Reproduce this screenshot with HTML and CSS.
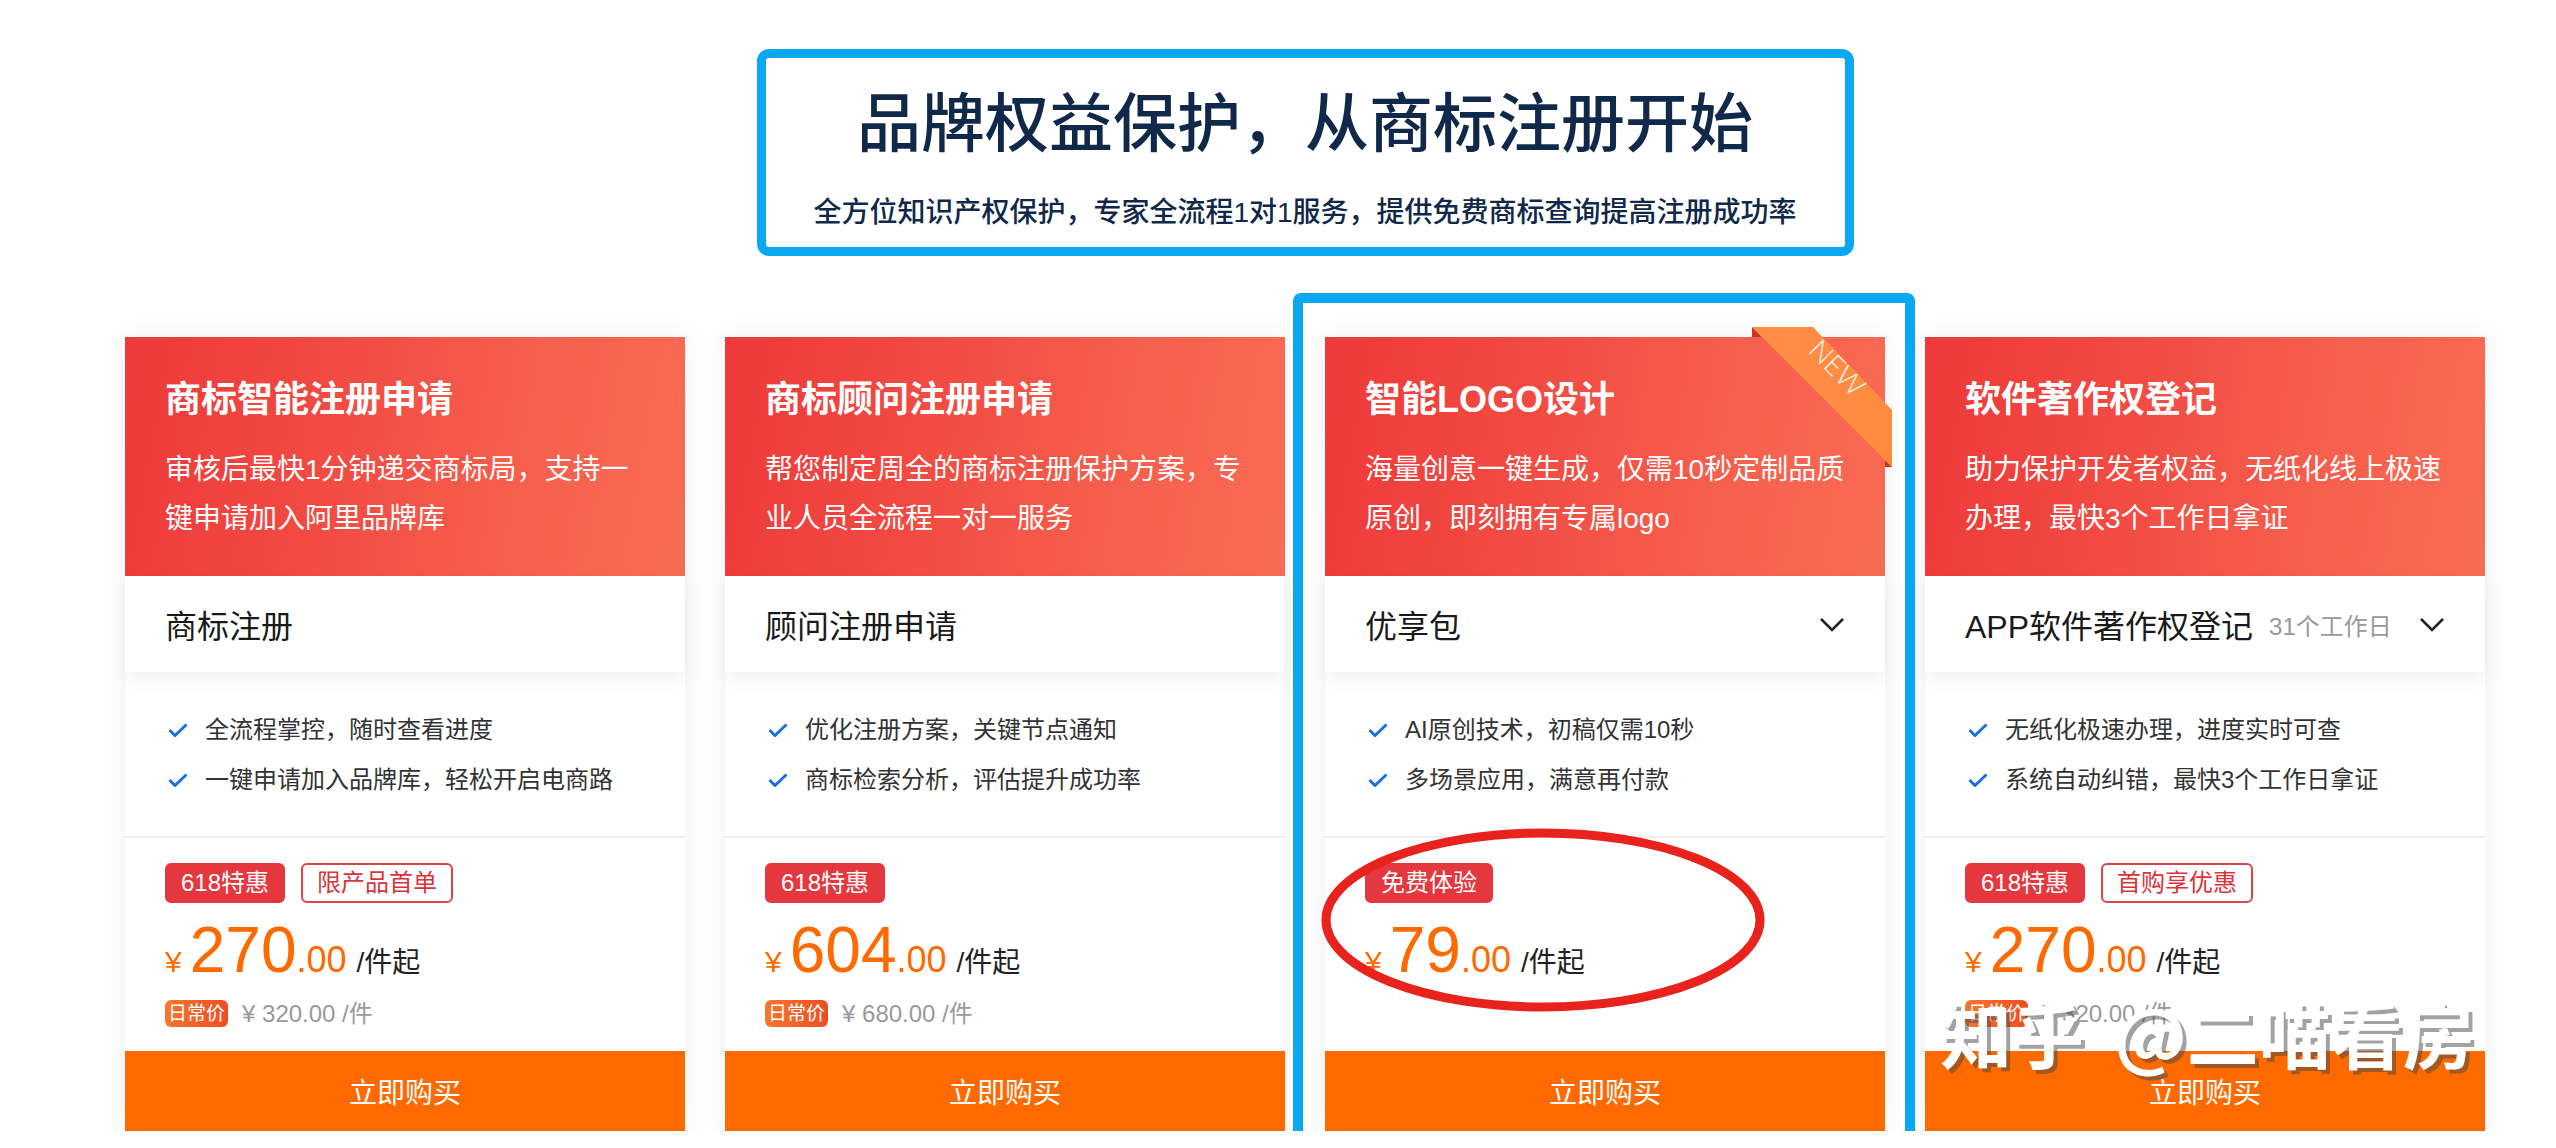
FILE: index.html
```html
<!DOCTYPE html>
<html lang="zh-CN">

<head>
    <meta charset="UTF-8">
    <meta name="viewport" content="width=device-width, initial-scale=1.0">
    <title>品牌权益保护</title>

    <link rel="stylesheet" href="styles.css">
</head>

<body>
<div class="page">
    <div class="intro">
        <h1 class="intro-title">品牌权益保护，从商标注册开始</h1>
        <p class="intro-desc">全方位知识产权保护，专家全流程1对1服务，提供免费商标查询提高注册成功率</p>
    </div>

    <div class="card-list">
        <!-- 商标智能注册 -->
        <div class="card">
            <div class="card-head">
                <h2 class="card-title">商标智能注册申请</h2>
                <p class="card-desc">审核后最快1分钟递交商标局，支持一键申请加入阿里品牌库</p>
            </div>
            <div class="card-select">
                <span class="select-name">商标注册</span>
            </div>
            <ul class="card-feature">
                <li><svg class="check" viewBox="0 0 20 14"><polyline points="1.5,7 7,12.5 18.5,1.5"/></svg>全流程掌控，随时查看进度</li>
                <li><svg class="check" viewBox="0 0 20 14"><polyline points="1.5,7 7,12.5 18.5,1.5"/></svg>一键申请加入品牌库，轻松开启电商路</li>
            </ul>
            <div class="card-price">
                <div class="tags">
                    <span class="tag tag-fill">618特惠</span>
                    <span class="tag tag-line">限产品首单</span>
                </div>
                <div class="price">
                    <span class="yen">¥</span><span class="int">270</span><span class="dec">.00</span><span class="unit">/件起</span>
                </div>
                <div class="origin">
                    <span class="origin-badge">日常价</span>
                    <span class="origin-price">¥ 320.00 /件</span>
                </div>
            </div>
            <button class="buy">立即购买</button>
        </div>

        <!-- 商标顾问注册 -->
        <div class="card">
            <div class="card-head">
                <h2 class="card-title">商标顾问注册申请</h2>
                <p class="card-desc">帮您制定周全的商标注册保护方案，专业人员全流程一对一服务</p>
            </div>
            <div class="card-select">
                <span class="select-name">顾问注册申请</span>
            </div>
            <ul class="card-feature">
                <li><svg class="check" viewBox="0 0 20 14"><polyline points="1.5,7 7,12.5 18.5,1.5"/></svg>优化注册方案，关键节点通知</li>
                <li><svg class="check" viewBox="0 0 20 14"><polyline points="1.5,7 7,12.5 18.5,1.5"/></svg>商标检索分析，评估提升成功率</li>
            </ul>
            <div class="card-price">
                <div class="tags">
                    <span class="tag tag-fill">618特惠</span>
                </div>
                <div class="price">
                    <span class="yen">¥</span><span class="int">604</span><span class="dec">.00</span><span class="unit">/件起</span>
                </div>
                <div class="origin">
                    <span class="origin-badge">日常价</span>
                    <span class="origin-price">¥ 680.00 /件</span>
                </div>
            </div>
            <button class="buy">立即购买</button>
        </div>

        <!-- 智能LOGO -->
        <div class="card">
            <div class="card-head">
                <h2 class="card-title">智能LOGO设计</h2>
                <p class="card-desc">海量创意一键生成，仅需10秒定制品质原创，即刻拥有专属logo</p>
            </div>
            <div class="card-select">
                <span class="select-name">优享包</span>
                <svg class="arrow" viewBox="0 0 26 15"><path d="M2 2 L13 13 L24 2"/></svg>
            </div>
            <ul class="card-feature">
                <li><svg class="check" viewBox="0 0 20 14"><polyline points="1.5,7 7,12.5 18.5,1.5"/></svg>AI原创技术，初稿仅需10秒</li>
                <li><svg class="check" viewBox="0 0 20 14"><polyline points="1.5,7 7,12.5 18.5,1.5"/></svg>多场景应用，满意再付款</li>
            </ul>
            <div class="card-price">
                <div class="tags">
                    <span class="tag tag-fill">免费体验</span>
                </div>
                <div class="price">
                    <span class="yen">¥</span><span class="int">79</span><span class="dec">.00</span><span class="unit">/件起</span>
                </div>
            </div>
            <button class="buy">立即购买</button>

            <div class="ribbon">
                <svg class="ribbon-shape" viewBox="0 0 150 155">
                    <defs>
                        <linearGradient id="band" x1="0" y1="0" x2="1" y2="1">
                            <stop offset="0" stop-color="#ff8d47"/>
                            <stop offset="1" stop-color="#ff8a3f"/>
                        </linearGradient>
                    </defs>
                    <polygon points="7,5 68,5 147,88 147,145" fill="url(#band)"/>
                    <polygon points="7,5 17,15 7,15" fill="#c8361c"/>
                    <polygon points="140,138 147,145 140,145" fill="#c8361c"/>
                </svg>
                <span class="ribbon-text">NEW</span>
            </div>
            <svg class="mark-ellipse" viewBox="0 0 460 200"><ellipse cx="230" cy="100" rx="217" ry="87"/></svg>
            <div class="mark-frame"></div>
        </div>

        <!-- 软件著作权 -->
        <div class="card">
            <div class="card-head">
                <h2 class="card-title">软件著作权登记</h2>
                <p class="card-desc">助力保护开发者权益，无纸化线上极速办理，最快3个工作日拿证</p>
            </div>
            <div class="card-select">
                <span class="select-name">APP软件著作权登记</span>
                <span class="select-note">31个工作日</span>
                <svg class="arrow" viewBox="0 0 26 15"><path d="M2 2 L13 13 L24 2"/></svg>
            </div>
            <ul class="card-feature">
                <li><svg class="check" viewBox="0 0 20 14"><polyline points="1.5,7 7,12.5 18.5,1.5"/></svg>无纸化极速办理，进度实时可查</li>
                <li><svg class="check" viewBox="0 0 20 14"><polyline points="1.5,7 7,12.5 18.5,1.5"/></svg>系统自动纠错，最快3个工作日拿证</li>
            </ul>
            <div class="card-price">
                <div class="tags">
                    <span class="tag tag-fill">618特惠</span>
                    <span class="tag tag-line">首购享优惠</span>
                </div>
                <div class="price">
                    <span class="yen">¥</span><span class="int">270</span><span class="dec">.00</span><span class="unit">/件起</span>
                </div>
                <div class="origin">
                    <span class="origin-badge">日常价</span>
                    <span class="origin-price">¥ 320.00 /件</span>
                </div>
            </div>
            <button class="buy">立即购买</button>

            <div class="watermark">知乎 @二喵看房</div>
        </div>
    </div>
</div>
</body>

</html>
```

FILE: styles.css
```css
* {
    box-sizing: border-box;
    margin: 0;
    padding: 0;
}

body {
    background-color: #fff;
    font-family: "Liberation Sans", "Noto Sans CJK SC", sans-serif;
    color: #222;
}

.page {
    width: 2360px;
    margin-left: 125px;
    padding-top: 49px;
}

/* 상단 타이틀 박스 */
.intro {
    width: 1097px;
    height: 207px;
    margin: 0 auto;
    padding-top: 31px;
    border: 9px solid #0aa8f3;
    border-radius: 12px;
    text-align: center;
    color: #10284a;
}

.intro-title {
    font-size: 64px;
    line-height: 70px;
    font-weight: 500;
}

.intro-desc {
    margin-top: 34px;
    font-size: 28px;
    line-height: 40px;
    font-weight: 500;
}

.card-list {
    display: flex;
    gap: 40px;
    margin-top: 81px;
}

.card {
    position: relative;
    display: flex;
    flex-direction: column;
    width: 560px;
    background-color: #fff;
    box-shadow: 0 0 24px rgba(0, 0, 0, 0.07);
}

.card-head {
    padding: 38px 30px 33px 40px;
    color: #fff;
    background: linear-gradient(100deg, #ee393a 0%, #f24a42 35%, #f65f4d 70%, #f96b54 100%);
}

.card-title {
    font-size: 36px;
    line-height: 50px;
    font-weight: 700;
}

.card-desc {
    margin-top: 20px;
    font-size: 28px;
    line-height: 49px;
}

.card-select {
    position: relative;
    z-index: 1;
    display: flex;
    align-items: center;
    height: 96px;
    padding: 0 40px;
    font-size: 32px;
    color: #1a1a1a;
    background-color: #fff;
    box-shadow: 0 8px 18px rgba(0, 0, 0, 0.05);
}

.select-note {
    margin-left: 16px;
    font-size: 24px;
    color: #999;
}

.arrow {
    width: 26px;
    height: 15px;
    margin-left: auto;
    fill: none;
    stroke: #222;
    stroke-width: 2.6;
}

.card-feature {
    list-style: none;
    padding: 33px 40px 31px 43px;
    font-size: 24px;
    line-height: 50px;
    color: #333;
}

.card-feature li {
    display: flex;
    align-items: center;
}

.check {
    width: 20px;
    height: 14px;
    margin-right: 17px;
    fill: none;
    stroke: #1c6fdf;
    stroke-width: 3;
}

.card-price {
    flex: 1;
    padding: 25px 40px 24px;
    border-top: 2px solid #eeeeee;
}

.tags {
    display: flex;
    gap: 16px;
}

.tag {
    height: 40px;
    padding: 0 14px;
    border: 2px solid #e5383e;
    border-radius: 6px;
    font-size: 24px;
    line-height: 36px;
}

.tag-fill {
    color: #fff;
    background-color: #e5383e;
}

.tag-line {
    border-color: #d9474c;
    color: #d8343a;
}

.price {
    display: flex;
    align-items: baseline;
    height: 64px;
    margin-top: 15px;
    line-height: 1;
    color: #ff6a00;
}

.price .yen {
    margin-right: 8px;
    font-size: 30px;
}

.price .int {
    font-size: 64px;
}

.price .dec {
    font-size: 36px;
}

.price .unit {
    margin-left: 10px;
    font-size: 28px;
    color: #222;
}

.origin {
    display: flex;
    align-items: center;
    height: 27px;
    margin-top: 18px;
}

.origin-badge {
    height: 27px;
    padding: 0 3px;
    border-radius: 6px;
    font-size: 19px;
    line-height: 27px;
    color: #fff;
    background: linear-gradient(90deg, #f7772d, #ee4d22);
}

.origin-price {
    margin-left: 14px;
    font-size: 24px;
    line-height: 27px;
    color: #999;
}

.buy {
    width: 100%;
    height: 80px;
    border: none;
    font-family: inherit;
    font-size: 28px;
    color: #fff;
    background-color: #ff6a00;
}

/* NEW 리본 */
.ribbon {
    position: absolute;
    top: -15px;
    left: 420px;
    width: 150px;
    height: 155px;
}

.ribbon-shape {
    display: block;
    width: 150px;
    height: 155px;
}

.ribbon-text {
    position: absolute;
    top: 30px;
    left: 53px;
    width: 80px;
    font-family: Lato, "Liberation Sans", sans-serif;
    font-size: 28px;
    font-weight: 300;
    line-height: 30px;
    text-align: center;
    color: #fff5ec;
    transform: rotate(45deg);
}

/* 주석 표시 */
.mark-frame {
    position: absolute;
    top: -44px;
    left: -32px;
    right: -30px;
    bottom: -16px;
    border: 10px solid #0aa8f3;
    border-radius: 8px;
    pointer-events: none;
}

.mark-ellipse {
    position: absolute;
    top: 483px;
    left: -12px;
    width: 460px;
    height: 200px;
    fill: none;
    stroke: #e8231d;
    stroke-width: 9;
    pointer-events: none;
}

.watermark {
    position: absolute;
    top: 655px;
    left: 15px;
    font-family: "Noto Sans CJK SC", sans-serif;
    font-size: 72px;
    font-weight: 700;
    line-height: 80px;
    word-spacing: 14px;
    white-space: nowrap;
    color: #fff;
    text-shadow: 4px 4px 0 rgba(70, 70, 70, 0.5);
    pointer-events: none;
}
```
